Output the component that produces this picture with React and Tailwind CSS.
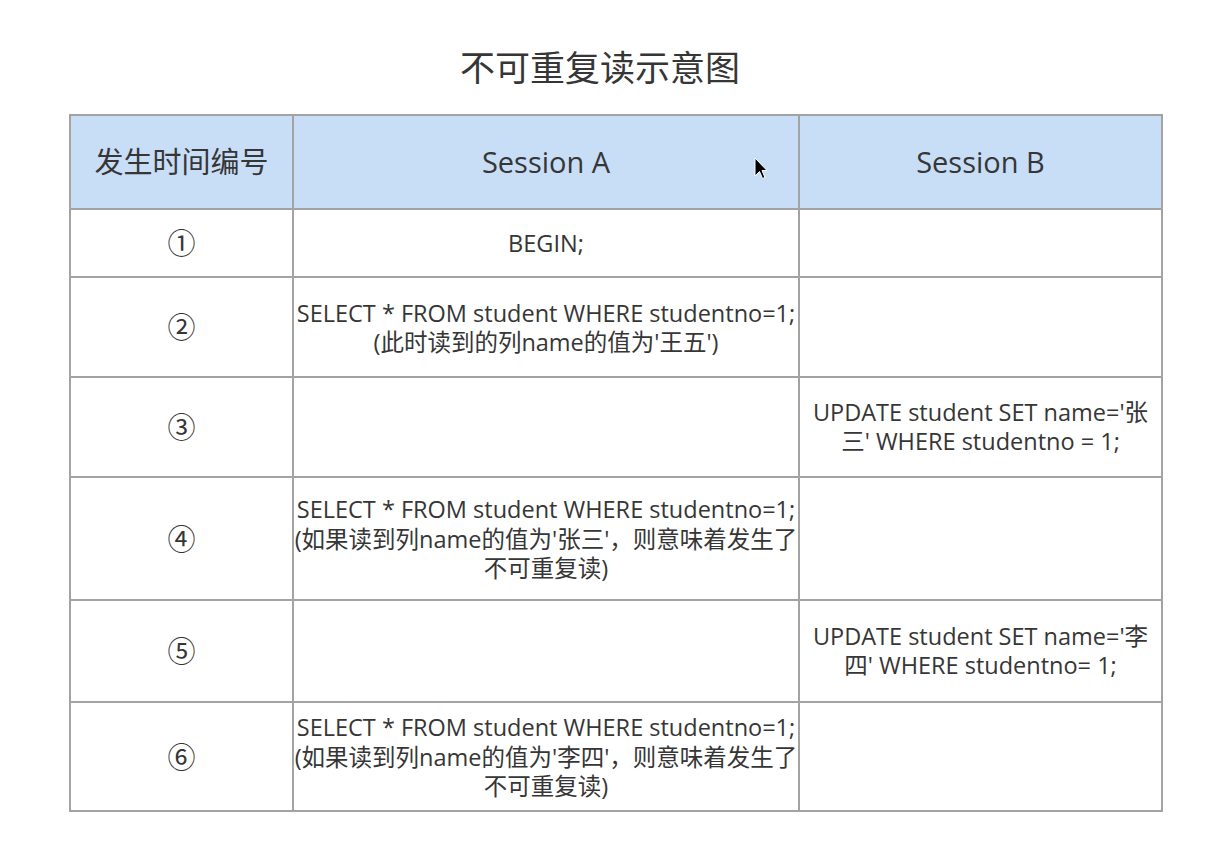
export default function App() {
  const font = { fontFamily: '"Open Sans", "Noto Sans CJK SC", sans-serif' };
  const rows = [
    { h: 'h-[68px]', n: '①', a: ['BEGIN;'], b: [] },
    { h: 'h-[100px]', n: '②', a: ['SELECT * FROM student WHERE studentno=1;', "(此时读到的列name的值为'王五')"], b: [] },
    { h: 'h-[100px]', n: '③', a: [], b: ["UPDATE student SET name='张", "三' WHERE studentno = 1;"] },
    { h: 'h-[123px]', n: '④', a: ['SELECT * FROM student WHERE studentno=1;', "(如果读到列name的值为'张三'，则意味着发生了", '不可重复读)'], b: [] },
    { h: 'h-[102px]', n: '⑤', a: [], b: ["UPDATE student SET name='李", "四' WHERE studentno= 1;"] },
    { h: 'h-[109px]', n: '⑥', a: ['SELECT * FROM student WHERE studentno=1;', "(如果读到列name的值为'李四'，则意味着发生了", '不可重复读)'], b: [] },
  ];
  return (
    <div className="w-[1216px] h-[844px] bg-white text-[#363636] relative" style={font}>
      <div className="pt-[44px] pr-[16px] h-[114px] text-center text-[35px] leading-[48px] text-[#363636]">不可重复读示意图</div>
      <div className="px-[69px]">
        <table className="w-[1092px] border-collapse table-fixed">
          <colgroup>
            <col className="w-[223px]" />
            <col className="w-[506px]" />
            <col className="w-[363px]" />
          </colgroup>
          <thead>
            <tr className="h-[94px] bg-[#c8ddf6]">
              <th className="border-2 border-[#a3a3a3] font-normal text-[29px] text-[#363636]">发生时间编号</th>
              <th className="border-2 border-[#a3a3a3] font-normal text-[29px] text-[#363636]">Session A</th>
              <th className="border-2 border-[#a3a3a3] font-normal text-[29px] text-[#363636]">Session B</th>
            </tr>
          </thead>
          <tbody>
            {rows.map((r, i) => (
              <tr key={i} className={r.h}>
                <td className="border-2 border-[#a3a3a3] text-center text-[28px]">{r.n}</td>
                <td className="border-2 border-[#a3a3a3] text-center text-[23.5px] leading-[29.5px] px-0 pt-[2px]">
                  {r.a.map((t, j) => (<div key={j} className="whitespace-nowrap">{t}</div>))}
                </td>
                <td className="border-2 border-[#a3a3a3] text-center text-[23.5px] leading-[29.5px]">
                  {r.b.map((t, j) => (<div key={j} className="whitespace-nowrap">{t}</div>))}
                </td>
              </tr>
            ))}
          </tbody>
        </table>
      </div>
      <svg className="absolute left-[754px] top-[157px]" width="14" height="24" viewBox="0 0 14 24">
        <path d="M1 1 L1 19 L5.5 14.5 L8.5 21.5 L11 20.5 L8 13.5 L13 13.5 Z" fill="#000" stroke="#fff" strokeWidth="1" />
      </svg>
    </div>
  );
}
